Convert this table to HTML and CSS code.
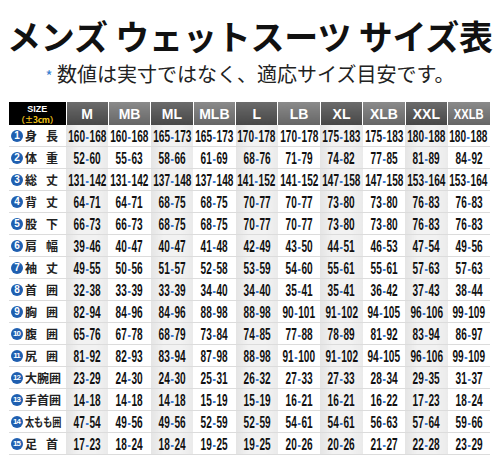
FILE: index.html
```html
<!DOCTYPE html>
<html lang="ja">
  <head>
    <meta charset="UTF-8" />
    <meta name="viewport" content="width=device-width, initial-scale=1.0" />
    <title>メンズ ウェットスーツ サイズ表</title>
    <link rel="stylesheet" href="styles.css">
  </head>
  <body>
    <h1 class="title">メンズ ウェットスーツ サイズ表</h1>
    <p class="note"><span class="star">*</span> 数値は実寸ではなく、適応サイズ目安です。</p>

    <table class="chart">
      <colgroup>
        <col class="col-label" />
        <col span="10" />
      </colgroup>
      <thead>
        <tr>
          <th class="size-head"><span class="size-en">SIZE</span><span class="size-tol">（±3cm）</span></th>
          <th class="dark">M</th>
          <th class="light">MB</th>
          <th class="dark">ML</th>
          <th class="light">MLB</th>
          <th class="dark">L</th>
          <th class="light">LB</th>
          <th class="dark">XL</th>
          <th class="light">XLB</th>
          <th class="dark">XXL</th>
          <th class="light"><span class="squeeze">XXLB</span></th>
        </tr>
      </thead>
      <tbody id="rows"></tbody>
    </table>

    <script>
      // 行データ：項目名・各サイズの範囲
      const rows = [
        ["身", "長", "160-168 160-168 165-173 165-173 170-178 170-178 175-183 175-183 180-188 180-188"],
        ["体", "重", "52-60 55-63 58-66 61-69 68-76 71-79 74-82 77-85 81-89 84-92"],
        ["総", "丈", "131-142 131-142 137-148 137-148 141-152 141-152 147-158 147-158 153-164 153-164"],
        ["背", "丈", "64-71 64-71 68-75 68-75 70-77 70-77 73-80 73-80 76-83 76-83"],
        ["股", "下", "66-73 66-73 68-75 68-75 70-77 70-77 73-80 73-80 76-83 76-83"],
        ["肩", "幅", "39-46 40-47 40-47 41-48 42-49 43-50 44-51 46-53 47-54 49-56"],
        ["袖", "丈", "49-55 50-56 51-57 52-58 53-59 54-60 55-61 55-61 57-63 57-63"],
        ["首", "囲", "32-38 33-39 33-39 34-40 34-40 35-41 35-41 36-42 37-43 38-44"],
        ["胸", "囲", "82-94 84-96 84-96 88-98 88-98 90-101 91-102 94-105 96-106 99-109"],
        ["腹", "囲", "65-76 67-78 68-79 73-84 74-85 77-88 78-89 81-92 83-94 86-97"],
        ["尻", "囲", "81-92 82-93 83-94 87-98 88-98 91-100 91-102 94-105 96-106 99-109"],
        ["大腕囲", null, "23-29 24-30 24-30 25-31 26-32 27-33 27-33 28-34 29-35 31-37"],
        ["手首囲", null, "14-18 14-18 14-18 15-19 15-19 16-21 16-21 16-22 17-23 18-24"],
        ["太もも囲", null, "47-54 49-56 49-56 52-59 52-59 54-61 54-61 56-63 57-64 59-66"],
        ["足", "首", "17-23 18-24 18-24 19-25 19-25 20-26 20-26 21-27 22-28 23-29"],
      ];

      const tbody = document.getElementById("rows");

      rows.forEach(([a, b, values], i) => {
        const tr = document.createElement("tr");

        const th = document.createElement("th");
        th.className = "item";
        let name;
        if (b) {
          name = `<span class="name"><span>${a}</span><span>${b}</span></span>`;
        } else if (a.length > 3) {
          name = `<span class="name tight">${a}</span>`;
        } else {
          name = `<span class="name">${[...a].map((c) => `<span>${c}</span>`).join("")}</span>`;
        }
        th.innerHTML = `<div class="item-in"><span class="badge${i >= 9 ? " two" : ""}">${i + 1}</span>${name}</div>`;
        tr.appendChild(th);

        values.split(" ").forEach((v, j) => {
          const td = document.createElement("td");
          td.className = j % 2 === 0 ? "shade" : "plain";
          const [lo, hi] = v.split("-");
          td.innerHTML = `<div class="cell"><span class="range">${lo}<span class="dash">-</span>${hi}</span></div>`;
          tr.appendChild(td);
        });

        tbody.appendChild(tr);
      });
    </script>
  </body>
</html>
```

FILE: styles.css
```css
:root {
  --blue: #1f5fb0;
  --dash: #3b78cf;
  --line: #dcdcdc;
}

body {
  margin: 0;
  background: #fff;
  color: #111;
  font-family: "Noto Sans CJK JP", "Liberation Sans", sans-serif;
}

.title {
  margin: 16px 0 0;
  height: 40px;
  line-height: 40px;
  font-size: 34px;
  font-weight: 700;
  text-align: center;
  letter-spacing: -0.2px;
  white-space: nowrap;
}

.note {
  margin: 6px 0 0;
  height: 24px;
  line-height: 24px;
  font-size: 20px;
  font-weight: 400;
  color: #222;
  text-align: center;
}

.star {
  color: #3a7fd0;
  font-size: 15px;
}

.chart {
  margin: 16px 0 0 9px;
  width: 481px;
  table-layout: fixed;
  border-collapse: collapse;
}

.col-label {
  width: 57px;
}

/* 見出し行 */
thead th {
  height: 23px;
  padding: 0;
  color: #fff;
  font-family: "Liberation Sans", sans-serif;
  font-size: 14px;
  font-weight: 700;
  text-align: center;
  border-right: 1px solid #fff;
}

thead th:last-child {
  border-right: 0;
}

thead th.dark {
  background: linear-gradient(#6b6b6b, #474747);
}

thead th.light {
  background: linear-gradient(#8a8a8a, #666);
}

.squeeze {
  display: inline-block;
  transform: scaleX(0.8);
}

.size-head {
  background: #000;
}

.size-en,
.size-tol {
  display: block;
  height: 10px;
  line-height: 10px;
  font-size: 9px;
}

.size-tol {
  color: #f2c418;
  font-family: "Noto Sans CJK JP", sans-serif;
  font-size: 8.5px;
  letter-spacing: -0.3px;
}

/* 本体 */
tbody th,
tbody td {
  height: 21px;
  padding: 0;
  border-bottom: 1px solid var(--line);
  overflow: hidden;
}

.item {
  background: #fff;
  text-align: left;
}

.item-in {
  display: flex;
  align-items: center;
  padding-left: 2px;
  gap: 2px;
  white-space: nowrap;
}

.badge {
  width: 12px;
  height: 12px;
  border-radius: 50%;
  background: var(--blue);
  color: #fff;
  font-family: "Liberation Sans", sans-serif;
  font-size: 10px;
  font-weight: 700;
  line-height: 12px;
  text-align: center;
  flex: none;
}

.badge.two {
  font-size: 8px;
  letter-spacing: -1px;
  text-indent: -1px;
}

.name {
  display: flex;
  justify-content: space-between;
  width: 33px;
  height: 16px;
  line-height: 16px;
  font-size: 12px;
  font-weight: 700;
  color: #222;
}

.name.tight {
  display: block;
  width: 48px;
  transform: scaleX(0.76);
  transform-origin: left center;
}

td.shade {
  background: linear-gradient(90deg, #e4e4e4, #f2f2f2 30%, #f2f2f2 70%, #eaeaea);
}

td.plain {
  background: #fff;
}

.cell {
  display: flex;
  justify-content: center;
}

.range {
  flex: none;
  height: 20px;
  line-height: 20px;
  font-family: "Liberation Sans", sans-serif;
  font-size: 16.5px;
  font-weight: 700;
  color: #111;
  white-space: nowrap;
  transform: scaleX(0.61);
}

.dash {
  color: var(--dash);
  margin: 0 1px;
}
```
